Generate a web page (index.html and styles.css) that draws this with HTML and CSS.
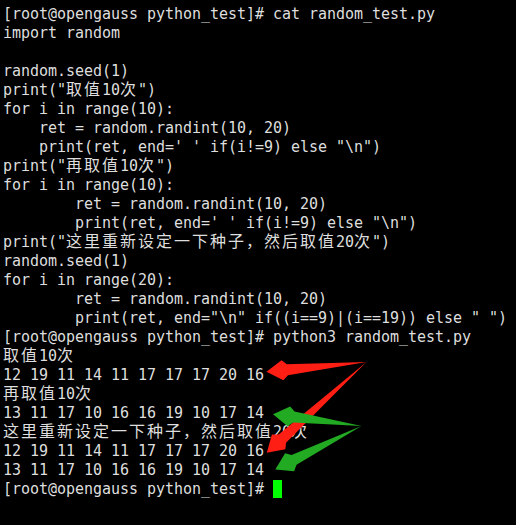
FILE: index.html
```html
<!DOCTYPE html>
<html lang="zh">
<head>
<meta charset="utf-8">
<title>python_test</title>
<link rel="stylesheet" href="styles.css">
</head>
<body>
<div class="term">
<pre class="screen">[root@opengauss python_test]# cat random_test.py
import random

random.seed(1)
print("<span class="cjk">取值</span>10<span class="cjk">次</span>")
for i in range(10):
    ret = random.randint(10, 20)
    print(ret, end=' ' if(i!=9) else "\n")
print("<span class="cjk">再取值</span>10<span class="cjk">次</span>")
for i in range(10):
        ret = random.randint(10, 20)
        print(ret, end=' ' if(i!=9) else "\n")
print("<span class="cjk">这里重新设定一下种子，然后取值</span>20<span class="cjk">次</span>")
random.seed(1)
for i in range(20):
        ret = random.randint(10, 20)
        print(ret, end="\n" if((i==9)|(i==19)) else " ")
[root@opengauss python_test]# python3 random_test.py
<span class="cjk">取值</span>10<span class="cjk">次</span>
12 19 11 14 11 17 17 17 20 16
<span class="cjk">再取值</span>10<span class="cjk">次</span>
13 11 17 10 16 16 19 10 17 14
<span class="cjk">这里重新设定一下种子，然后取值</span>20<span class="cjk">次</span>
12 19 11 14 11 17 17 17 20 16
13 11 17 10 16 16 19 10 17 14
[root@opengauss python_test]# <span class="cursor"></span></pre>
<svg class="marks" width="516" height="525" viewBox="0 0 516 525" xmlns="http://www.w3.org/2000/svg">
  <polygon class="red" points="366.5,362 286.86,364.28 281.45,360.29 266.5,371.8 283.4,380.19 287.94,375.22"/>
  <polygon class="red" points="366.5,362 278.63,434.5 271.9,434.53 266.8,452.7 285.36,449.33 286.03,442.64"/>
  <polygon class="green" points="361.5,426 294.53,411.6 290.17,406.49 273,414.3 287.55,426.31 293.09,422.5"/>
  <polygon class="green" points="361.5,426 291.59,455.05 285.09,453.27 275.3,469.4 294.09,471.13 296.53,464.87"/>
</svg>
</div>
</body>
</html>
```
FILE: styles.css
```css
html, body {
  margin: 0;
  padding: 0;
  background: #000;
}
.term {
  position: relative;
  width: 516px;
  height: 525px;
  overflow: hidden;
  background: #000;
}
.screen {
  margin: 0;
  padding: 5px 0 0 3px;
  font-family: "DejaVu Sans Mono", "Liberation Mono", monospace;
  font-size: 15px;
  letter-spacing: -0.03px;
  line-height: 19px;
  color: #dedede;
  white-space: pre;
}
.cjk {
  font-family: "Noto Sans CJK SC", "DejaVu Sans", sans-serif;
  font-size: 16px;
  letter-spacing: 2px;
  line-height: 0;
}
.cursor {
  display: inline-block;
  width: 9px;
  height: 18px;
  background: #00ff00;
  vertical-align: top;
}
.marks {
  position: absolute;
  left: 0;
  top: 0;
  pointer-events: none;
}
.red {
  fill: #ff1e14;
}
.green {
  fill: #22aa22;
}
```
